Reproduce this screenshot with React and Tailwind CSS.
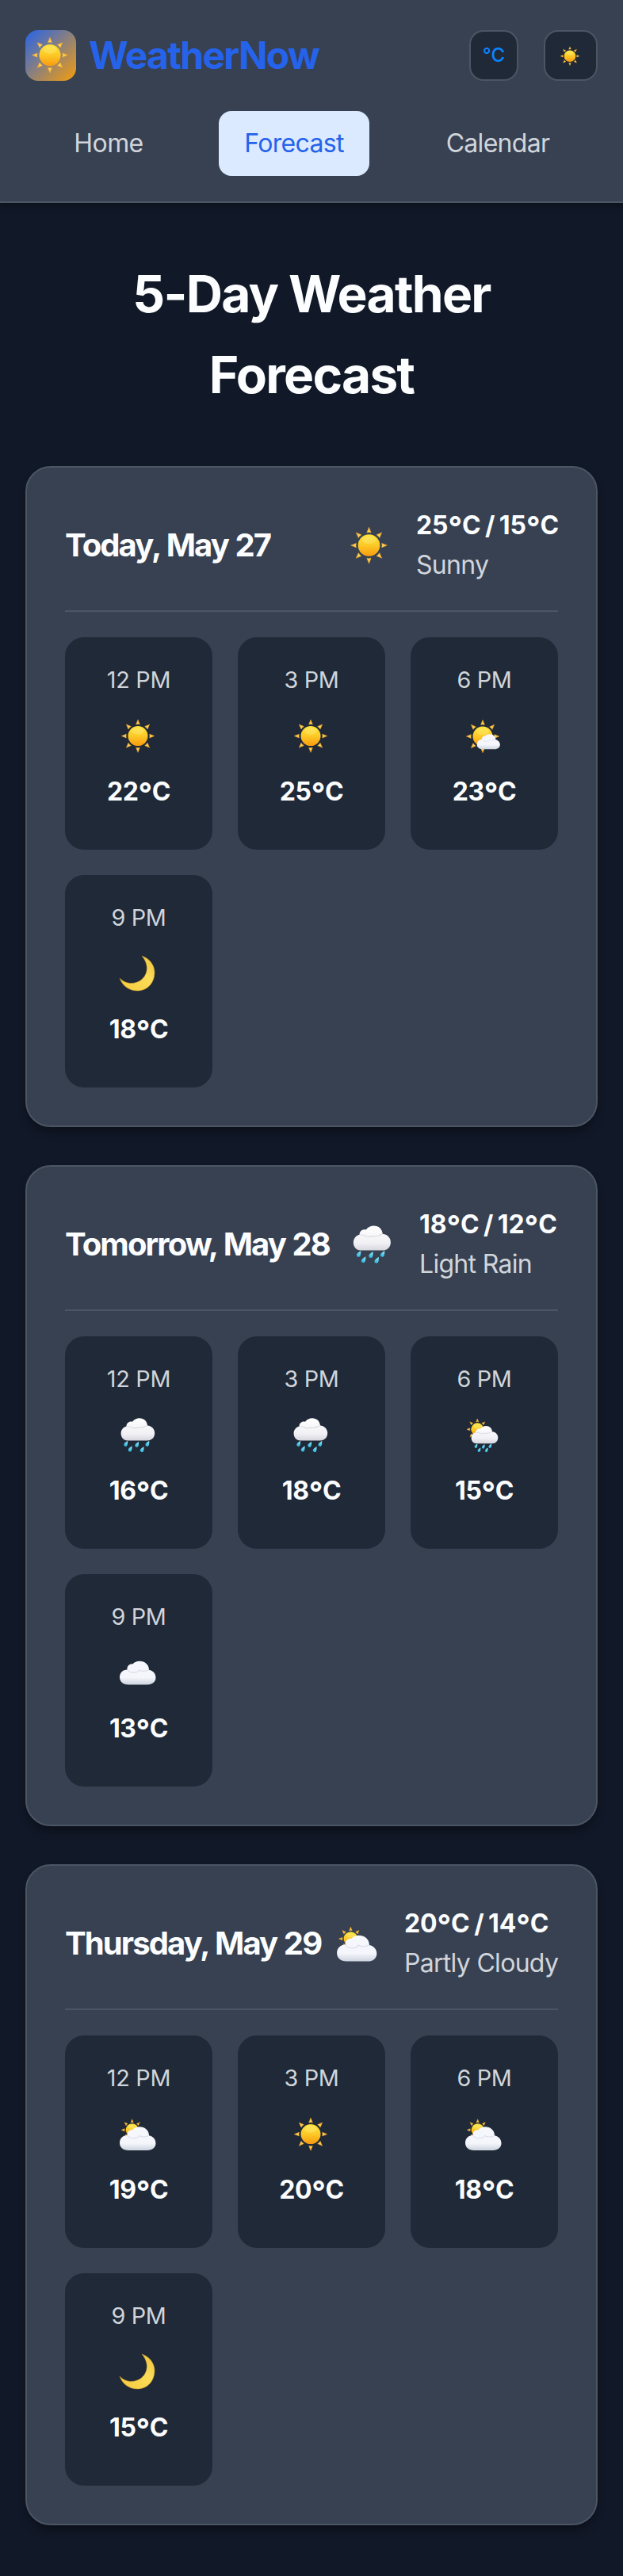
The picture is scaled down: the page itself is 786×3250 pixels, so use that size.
import React from "react";

const rays = [0, 45, 90, 135, 180, 225, 270, 315];

function SunShape({ cx, cy, r, tip }) {
  const base = r * 1.17;
  const half = r * 0.19;
  return (
    <g transform={`translate(${cx} ${cy})`}>
      {rays.map((a) => (
        <path
          key={a}
          transform={`rotate(${a})`}
          d={`M0 ${-tip} L${half} ${-base} Q0 ${-base - 0.8} ${-half} ${-base} Z`}
          fill="url(#rayFill)"
          stroke="#f2a62c"
          strokeWidth="0.5"
          strokeLinejoin="round"
        />
      ))}
      <circle r={r} fill="url(#sunFill)" />
      <ellipse cy={-r * 0.5} rx={r * 0.62} ry={r * 0.36} fill="#fff59a" opacity="0.3" />
    </g>
  );
}

function RainCloud() {
  return (
    <g>
      <path
        d="M11 30.4C5.5 30.4 2.6 26 2.6 21.5C2.6 17 5.5 13.5 9.5 12.5C9.5 8.5 13 5.8 17 6.8C19 3.8 22.5 2.3 26 2.3C31.5 2.3 35.5 6 36 11.5C41.5 12 45.2 16 45.2 21C45.2 26.5 41.5 30.4 36 30.4Z"
        fill="url(#cloudFill)"
      />
      <path
        d="M10.5 13Q14.5 12.2 17 14.2Q20 15.6 23 14Q29 15.2 35.5 11.8"
        fill="none"
        stroke="#c9ccd5"
        strokeWidth="1.1"
        opacity="0.65"
      />
    </g>
  );
}

function PuffyCloud() {
  return (
    <g>
      <path
        d="M12 44C5 44 1 40 1 34.5C1 29 5 25 10.5 25C10 20.5 13.5 17.5 17.5 18C19.5 15.5 22.5 14.3 26 14.3C33 14.3 38 19 38 25.3C43 26.3 46.5 30 46.5 35C46.5 40.5 42 44 36 44Z"
        fill="url(#puffFill)"
      />
      <path
        d="M11 25.5Q14 29.5 20 28.5Q23 29.5 25.5 25.5Q31 28.5 37.5 25.5"
        fill="none"
        stroke="#cbd1df"
        strokeWidth="1.1"
        opacity="0.6"
      />
    </g>
  );
}

function Drops({ points, size }) {
  return points.map(([x, y]) => (
    <path
      key={x}
      transform={`translate(${x} ${y}) rotate(28) scale(${size})`}
      d="M0 -4C1.2 -1.6 2 -0.4 2 1.1A2 2 0 0 1 -2 1.1C-2 -0.4 -1.2 -1.6 0 -4Z"
      fill="url(#dropFill)"
    />
  ));
}

function WeatherIcon({ kind, className }) {
  return (
    <svg viewBox="0 0 48 48" className={className} aria-hidden="true">
      {kind === "sun" && <SunShape cx={24} cy={23.6} r={12.5} tip={20.7} />}
      {kind === "mostlySunny" && (
        <>
          <SunShape cx={23} cy={24} r={12.5} tip={20.7} />
          <g transform="translate(15.1 12.1) scale(0.64)">
            <PuffyCloud />
          </g>
        </>
      )}
      {kind === "partlyCloudy" && (
        <>
          <SunShape cx={16.7} cy={18.2} r={8} tip={13.5} />
          <PuffyCloud />
        </>
      )}
      {kind === "rain" && (
        <>
          <RainCloud />
          <Drops size={1.1} points={[[9, 34.6], [23, 35.6], [36.2, 34.6], [14.5, 41.2], [29.5, 41.8]]} />
        </>
      )}
      {kind === "sunRain" && (
        <>
          <SunShape cx={16.3} cy={16.3} r={8} tip={13.3} />
          <g transform="translate(6.6 10.2) scale(0.79)">
            <RainCloud />
          </g>
          <Drops size={0.85} points={[[14.7, 37.4], [24, 38.2], [32.5, 37.4], [18.7, 42.4], [28, 42.6]]} />
        </>
      )}
      {kind === "moon" && (
        <path
          d="M29 1C38.5 4.5 45 12 45 22C45 35 36 45 23.5 45C13 45 4.5 39 1 29C8 37 20.5 37.5 28.5 31C37 24 38 11.5 29 1Z"
          fill="url(#moonFill)"
          stroke="#c99a2a"
          strokeWidth="0.5"
        />
      )}
      {kind === "cloud" && (
        <g transform="translate(0 -5.6)">
          <PuffyCloud />
        </g>
      )}
    </svg>
  );
}

function IconPaints() {
  return (
    <svg className="absolute size-0" aria-hidden="true">
      <defs>
        <linearGradient id="sunFill" x1="0" y1="0" x2="0" y2="1">
          <stop offset="0" stopColor="#fde238" />
          <stop offset="0.5" stopColor="#fdc926" />
          <stop offset="1" stopColor="#f89a10" />
        </linearGradient>
        <linearGradient id="rayFill" x1="0" y1="0" x2="0" y2="1">
          <stop offset="0" stopColor="#fbb731" />
          <stop offset="1" stopColor="#fdd862" />
        </linearGradient>
        <linearGradient id="cloudFill" x1="0" y1="0" x2="0" y2="1">
          <stop offset="0" stopColor="#ffffff" />
          <stop offset="0.7" stopColor="#f1f1f5" />
          <stop offset="1" stopColor="#d6d6de" />
        </linearGradient>
        <linearGradient id="puffFill" x1="0" y1="0" x2="0" y2="1">
          <stop offset="0" stopColor="#f6f8fd" />
          <stop offset="0.7" stopColor="#f4f6fb" />
          <stop offset="1" stopColor="#cdd3df" />
        </linearGradient>
        <linearGradient id="dropFill" x1="0" y1="0" x2="0" y2="1">
          <stop offset="0" stopColor="#a0ecfa" />
          <stop offset="1" stopColor="#25b4df" />
        </linearGradient>
        <linearGradient id="moonFill" x1="0" y1="1" x2="1" y2="0">
          <stop offset="0" stopColor="#f5c93c" />
          <stop offset="0.6" stopColor="#fbdc58" />
          <stop offset="1" stopColor="#eec040" />
        </linearGradient>
      </defs>
    </svg>
  );
}

const days = [
  {
    name: "Today, May 27",
    icon: "sun",
    temps: "25°C / 15°C",
    text: "Sunny",
    width: "w-[179px]",
    hours: [["12 PM", "sun", "22°C"], ["3 PM", "sun", "25°C"], ["6 PM", "mostlySunny", "23°C"], ["9 PM", "moon", "18°C"]],
  },
  {
    name: "Tomorrow, May 28",
    icon: "rain",
    temps: "18°C / 12°C",
    text: "Light Rain",
    width: "w-[175px]",
    hours: [["12 PM", "rain", "16°C"], ["3 PM", "rain", "18°C"], ["6 PM", "sunRain", "15°C"], ["9 PM", "cloud", "13°C"]],
  },
  {
    name: "Thursday, May 29",
    icon: "partlyCloudy",
    temps: "20°C / 14°C",
    text: "Partly Cloudy",
    width: "w-[194px]",
    hours: [["12 PM", "partlyCloudy", "19°C"], ["3 PM", "sun", "20°C"], ["6 PM", "partlyCloudy", "18°C"], ["9 PM", "moon", "15°C"]],
  },
];

// Temperatures are set with a slightly enlarged degree ring.
function Temp({ value }) {
  return value.split("°").map((part, i) => (
    <React.Fragment key={i}>
      {i > 0 && <span className="align-[-0.14em] text-[1.2em] leading-none">°</span>}
      {part}
    </React.Fragment>
  ));
}

function HourTile({ hour, icon, temp }) {
  return (
    <div className="flex h-[268px] flex-col items-center rounded-3xl bg-[#1f2937] pt-[31px]">
      <div className="h-[46px] text-[28.8px] leading-[46px] tracking-[-0.3px] text-[#d1d5db]">{hour}</div>
      <WeatherIcon kind={icon} className="mt-6 mr-0.5 size-12" />
      <div className="mt-5 h-[51px] text-[32px] leading-[51px] font-bold tracking-[-0.4px]">
        <Temp value={temp} />
      </div>
    </div>
  );
}

function DayCard({ day }) {
  return (
    <section className="h-[834px] rounded-[32px] border-2 border-[#4b5563] bg-[#374151] p-12 shadow-[0_8px_12px_-2px_rgba(0,0,0,0.35)]">
      <div className="flex h-[134px] items-center justify-between border-b-2 border-[#4b5563] pb-8">
        <h2 className="text-[40px] leading-[64px] font-bold tracking-[-1.9px] whitespace-nowrap [word-spacing:1px]">
          {day.name}
        </h2>
        <div className="flex items-center gap-8">
          <div className="flex w-14 shrink-0 justify-center">
            <WeatherIcon kind={day.icon} className="size-[53px] shrink-0" />
          </div>
          <div className={`${day.width} text-[32px] leading-[50px] whitespace-nowrap`}>
            <div className="h-[50px] font-bold tracking-[-0.1px] [word-spacing:-2px]">
              <Temp value={day.temps} />
            </div>
            <div className="h-[50px] tracking-[-0.7px] text-[#d1d5db]">{day.text}</div>
          </div>
        </div>
      </div>
      <div className="mt-8 grid grid-cols-3 gap-8">
        {day.hours.map(([hour, icon, temp]) => (
          <HourTile key={hour} hour={hour} icon={icon} temp={temp} />
        ))}
      </div>
    </section>
  );
}

export default function App() {
  return (
    <div className="h-[3250px] w-[786px] bg-[#111827] font-['Inter',sans-serif] text-[#fcfdfe]">
      <IconPaints />
      <header className="flex h-64 flex-col gap-[38px] border-b-2 border-[#4b5563] bg-[#374151] px-8 pt-[38px] shadow-[0_4px_8px_rgba(0,0,0,0.3)]">
        <div className="flex h-16 items-center justify-between">
          <div className="flex items-center gap-4">
            <div className="flex size-16 items-center justify-center rounded-2xl bg-[linear-gradient(135deg,#2563eb,#f59e0b)] pr-0.5">
              <WeatherIcon kind="sun" className="size-[52px]" />
            </div>
            <span className="text-[48px] leading-[62px] font-bold tracking-[-1.7px] text-[#2563eb]">WeatherNow</span>
          </div>
          <div className="flex gap-8">
            <button className="flex h-16 w-[62px] items-center justify-center rounded-[18px] border-2 border-[#4b5563] bg-[#1f2937] text-2xl text-[#0a84ff]">
              <span className="font-medium">°C</span>
            </button>
            <button className="flex h-16 w-[68px] items-center justify-center rounded-[18px] border-2 border-[#4b5563] bg-[#1f2937] pt-0.5 pr-0.5">
              <WeatherIcon kind="sun" className="size-7" />
            </button>
          </div>
        </div>
        <nav className="flex h-[82px] items-center pl-[29px] text-[32px] leading-[82px] text-[#d1d5db]">
          <a className="w-[152px] text-center tracking-[-0.6px]">Home</a>
          <a className="ml-[63px] w-[190px] rounded-2xl bg-[#dbeafe] text-center tracking-[-0.7px] text-[#2563eb]">Forecast</a>
          <a className="ml-[64px] w-[196px] text-center tracking-[-0.7px]">Calendar</a>
        </nav>
      </header>
      <main className="px-8 pt-16">
        <h1 className="mb-16 h-[204px] text-center text-[64px] leading-[102px] font-bold tracking-[-1.7px]">
          5-Day Weather
          <br />
          Forecast
        </h1>
        <div className="flex flex-col gap-12">
          {days.map((day) => (
            <DayCard key={day.name} day={day} />
          ))}
        </div>
      </main>
    </div>
  );
}
